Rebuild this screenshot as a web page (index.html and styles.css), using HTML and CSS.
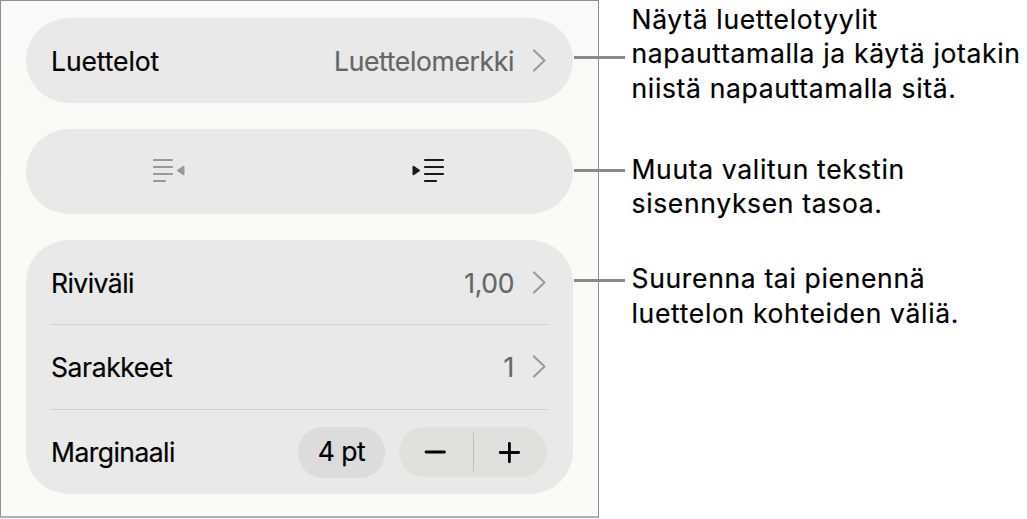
FILE: index.html
```html
<!doctype html>
<html lang="fi">
<head>
    <meta charset="utf-8">
    <meta name="viewport" content="width=device-width, initial-scale=1">
    <link rel="stylesheet" href="styles.css">
    <title>Luettelot</title>
</head>
<body>
    <div class="figure">
        <div class="panel">
            <div class="group">
                <div class="row">
                    <span class="label lists">Luettelot</span>
                    <span class="value">Luettelomerkki</span>
                    <svg class="chevron" width="16" height="26" viewBox="0 0 16 26"><path d="M2 2.5 L12.5 12.5 L2 22.5"/></svg>
                </div>
            </div>

            <!-- sisennyspainikkeet -->
            <div class="group indent">
                <svg class="outdent-icon" width="34" height="26" viewBox="0 0 34 26">
                    <path d="M2 2H20M2 9H20M2 16H20M2 23H13"/>
                    <polygon points="26,12.5 31.5,8.8 31.5,16.2"/>
                </svg>
                <svg class="indent-icon" width="34" height="26" viewBox="0 0 34 26">
                    <path d="M14 2H32M14 9H32M14 16H32M14 23H25"/>
                    <polygon points="2.5,8.8 8,12.5 2.5,16.2"/>
                </svg>
            </div>

            <div class="group">
                <div class="row first">
                    <span class="label">Riviväli</span>
                    <span class="value">1,00</span>
                    <svg class="chevron" width="16" height="26" viewBox="0 0 16 26"><path d="M2 2.5 L12.5 12.5 L2 22.5"/></svg>
                </div>
                <div class="row">
                    <span class="label columns">Sarakkeet</span>
                    <span class="value">1</span>
                    <svg class="chevron" width="16" height="26" viewBox="0 0 16 26"><path d="M2 2.5 L12.5 12.5 L2 22.5"/></svg>
                </div>
                <div class="row last">
                    <span class="label">Marginaali</span>
                    <span class="amount">4 pt</span>
                    <div class="stepper">
                        <svg width="74" height="50" viewBox="0 0 74 50"><path d="M27 25H45.5"/></svg>
                        <span class="divider"></span>
                        <svg width="73" height="50" viewBox="0 0 73 50"><path d="M26.2 25.5H44.7M35.4 16.3V34.8"/></svg>
                    </div>
                </div>
            </div>
        </div>

        <div class="callouts">
            <p class="callout">Näytä luettelotyylit<br>napauttamalla ja käytä jotakin<br>niistä napauttamalla sitä.<i class="leader"></i></p>
            <p class="callout level">Muuta valitun tekstin<br>sisennyksen tasoa.<i class="leader"></i></p>
            <p class="callout gap">Suurenna tai pienennä<br>luettelon kohteiden väliä.<i class="leader"></i></p>
        </div>
    </div>
</body>
</html>
```

FILE: styles.css
```css
body {
    margin: 0;
    background: #fff;
    color: #000;
    font-family: Inter, "Liberation Sans", sans-serif;
    font-size: 26.5px;
    -webkit-text-stroke: 0.2px;
    overflow: hidden;
}
.figure {
    display: flex;
    align-items: flex-start;
}
.panel {
    display: flex;
    flex-direction: column;
    gap: 26px;
    width: 599px;
    height: 518px;
    padding: 17px 25px 0;
    box-sizing: border-box;
    border: 1px solid #8e8e91;
    border-bottom: 2px solid #b0b0b0;
    background: linear-gradient(#f9f9f9, #fafaf8 45%);
}
.group {
    padding: 0 25px;
    border-radius: 43px / 42px;
    background: #e9e9e9;
}
.row {
    display: flex;
    align-items: center;
    height: 84.5px;
    box-sizing: border-box;
    padding-top: 1px;
}
.row.first {
    height: 84px;
}
.row + .row {
    padding-top: 0;
    border-top: 1px solid #d1d1d1;
}
.row.last {
    height: 85px;
}
.label {
    flex: 1;
    padding-top: 1px;
    letter-spacing: -0.55px;
}
.lists {
    letter-spacing: -0.1px;
}
.columns {
    letter-spacing: -0.4px;
}
.value {
    padding-top: 1px;
    color: #666;
    letter-spacing: -0.35px;
}
.row + .row .label,
.row + .row .value {
    padding-top: 0;
}
.chevron {
    margin-left: 18px;
    fill: none;
    stroke: #9c9c9c;
    stroke-width: 2.2;
    stroke-linecap: round;
    stroke-linejoin: round;
}
.indent {
    display: flex;
    align-items: center;
    height: 85.5px;
}
.indent path {
    fill: none;
    stroke-width: 2.2;
    stroke-linecap: round;
}
.indent polygon {
    stroke-width: 2;
    stroke-linejoin: round;
}
.outdent-icon {
    margin-left: 101px;
    fill: #999;
    stroke: #999;
}
.indent-icon {
    margin-left: 225px;
    fill: #1a1a1a;
    stroke: #1a1a1a;
}
.amount {
    width: 87px;
    height: 51px;
    margin-top: 2px;
    margin-right: 14px;
    border-radius: 25px;
    background: #dcdcdc;
    line-height: 48px;
    text-align: center;
    letter-spacing: -0.5px;
}
.stepper {
    display: flex;
    align-items: center;
    width: 148px;
    height: 50px;
    margin-right: 1px;
    border-radius: 25px;
    background: #e0e0de;
}
.stepper path {
    fill: none;
    stroke: #000;
    stroke-width: 2.8;
    stroke-linecap: round;
}
.divider {
    width: 1px;
    height: 38px;
    background: #bebebd;
}
.callouts {
    padding: 2px 0 0 32.5px;
    white-space: nowrap;
}
.callout {
    position: relative;
    margin: 0;
    line-height: 34.4px;
    letter-spacing: 0.66px;
}
.level {
    margin-top: 46.7px;
}
.gap {
    margin-top: 40.4px;
}
/* viiva paneelin reunasta selitteeseen */
.leader {
    position: absolute;
    left: -57.5px;
    top: 54px;
    width: 51px;
    height: 3px;
    background: #8a8a8a;
}
.level .leader {
    top: 17.4px;
}
.gap .leader {
    top: 17.4px;
}
```
